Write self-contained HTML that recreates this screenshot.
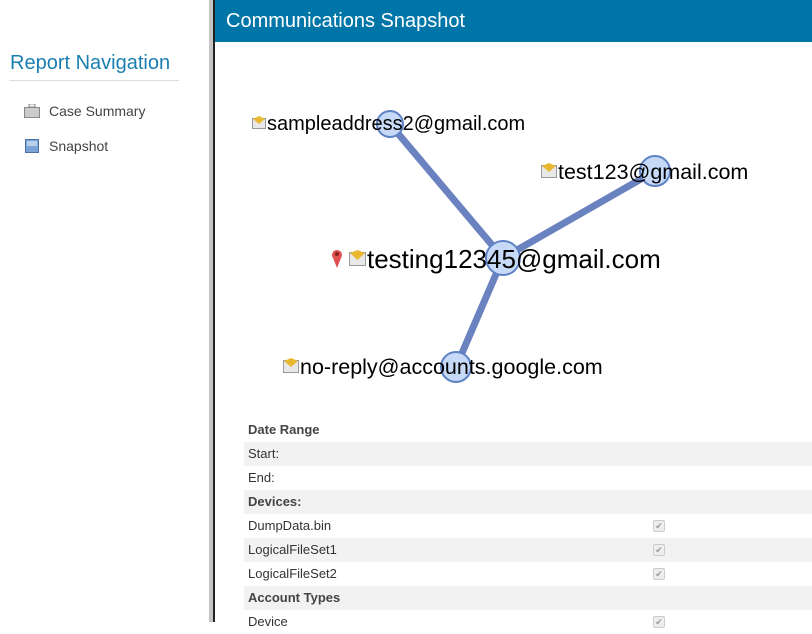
<!DOCTYPE html>
<html><head><style>
body{margin:0;width:812px;height:622px;overflow:hidden;font-family:"Liberation Sans",Arial,sans-serif;background:#fff;position:relative}
.side{position:absolute;left:0;top:0;width:209px;height:622px;background:#fff}
.bar{position:absolute;left:209px;top:0;width:4px;height:622px;background:#c4c4c4}
.line{position:absolute;left:213px;top:0;width:2px;height:622px;background:#222}
h2{position:absolute;left:10px;top:52px;margin:0;font-weight:normal;font-size:20px;color:#1a7fb0}
.hr{position:absolute;left:9px;top:80px;width:170px;height:1px;background:#ddd}
.nav{position:absolute;left:49px;font-size:14px;color:#444}
.hdr{position:absolute;left:215px;top:0;width:597px;height:42px;background:#0076a8;color:#fff;font-size:20px;line-height:42px;padding-left:11px;box-sizing:border-box}
.row{position:absolute;left:244px;width:568px;height:24px;font-size:13px;color:#333;line-height:24px;padding-left:4px;box-sizing:border-box}
.s{background:#f2f2f2}.b{font-weight:bold;color:#444}
.cb{position:absolute;left:409px;top:6px;width:10px;height:10px;border:1px solid #ccc;background:#eee;border-radius:2px;font-size:9px;line-height:10px;color:#999;text-align:center}
.lbl{position:absolute;color:#000;white-space:nowrap}
</style></head><body>
<div class="side">
<h2>Report Navigation</h2><div class="hr"></div>
<svg style="position:absolute;left:24px;top:104px" width="16" height="14"><rect x="5" y="0" width="6" height="3" fill="none" stroke="#888"/><rect x="0.5" y="3.5" width="15" height="10" fill="#ccc" stroke="#888"/></svg>
<div class="nav" style="top:103px">Case Summary</div>
<svg style="position:absolute;left:25px;top:139px" width="14" height="14"><rect x="0.5" y="0.5" width="13" height="13" fill="#7aa3d8" stroke="#4a6fa5"/><rect x="2" y="2" width="10" height="5" fill="#b8d0ee"/></svg>
<div class="nav" style="top:138px">Snapshot</div>
</div>
<div class="bar"></div><div class="line"></div>
<div class="hdr">Communications Snapshot</div>
<svg style="position:absolute;left:215px;top:42px" width="597" height="370">
<g stroke="#6a82bf" stroke-width="7" stroke-linecap="round">
<line x1="175" y1="82" x2="288" y2="216"/><line x1="440" y1="129" x2="288" y2="216"/><line x1="241" y1="325" x2="288" y2="216"/></g>
<g fill="#c6d9f7" stroke="#5f82c4" stroke-width="2">
<circle cx="175" cy="82" r="13"/><circle cx="440" cy="129" r="15"/><circle cx="288" cy="216" r="17"/><circle cx="241" cy="325" r="15"/></g>
</svg>
<div class="lbl" style="left:267px;top:113px;font-size:20px">sampleaddress2@gmail.com</div>
<div class="lbl" style="left:558px;top:160px;font-size:21.5px">test123@gmail.com</div>
<div class="lbl" style="left:367px;top:244px;font-size:26px">testing12345@gmail.com</div>
<div class="lbl" style="left:300px;top:355px;font-size:21.5px">no-reply@accounts.google.com</div>
<svg style="position:absolute;left:252px;top:116px" width="14" height="13"><rect x="0.5" y="2.5" width="13" height="10" fill="#e8e8e8" stroke="#999"/><path d="M1 3 L7 8 L13 3 L7 0Z" fill="#e8b830"/></svg>
<svg style="position:absolute;left:541px;top:163px" width="16" height="15"><rect x="0.5" y="2.5" width="15" height="12" fill="#e8e8e8" stroke="#999"/><path d="M1 3 L8 9 L15 3 L8 0Z" fill="#e8b830"/></svg>
<svg style="position:absolute;left:349px;top:250px" width="17" height="16"><rect x="0.5" y="2.5" width="16" height="13" fill="#e8e8e8" stroke="#999"/><path d="M1 3 L8.5 10 L16 3 L8.5 0Z" fill="#e8b830"/></svg>
<svg style="position:absolute;left:331px;top:248px" width="12" height="20"><path d="M6 20 L2 10 A5 5 0 1 1 10 10Z" fill="#e05050"/><circle cx="6" cy="6" r="2" fill="#822"/></svg>
<svg style="position:absolute;left:283px;top:358px" width="16" height="15"><rect x="0.5" y="2.5" width="15" height="12" fill="#e8e8e8" stroke="#999"/><path d="M1 3 L8 9 L15 3 L8 0Z" fill="#e8b830"/></svg>
<div class="row b" style="top:418px">Date Range</div>
<div class="row s" style="top:442px">Start:</div>
<div class="row" style="top:466px">End:</div>
<div class="row s b" style="top:490px">Devices:</div>
<div class="row" style="top:514px">DumpData.bin<span class="cb">✔</span></div>
<div class="row s" style="top:538px">LogicalFileSet1<span class="cb">✔</span></div>
<div class="row" style="top:562px">LogicalFileSet2<span class="cb">✔</span></div>
<div class="row s b" style="top:586px">Account Types</div>
<div class="row" style="top:610px">Device<span class="cb">✔</span></div>
</body></html>
